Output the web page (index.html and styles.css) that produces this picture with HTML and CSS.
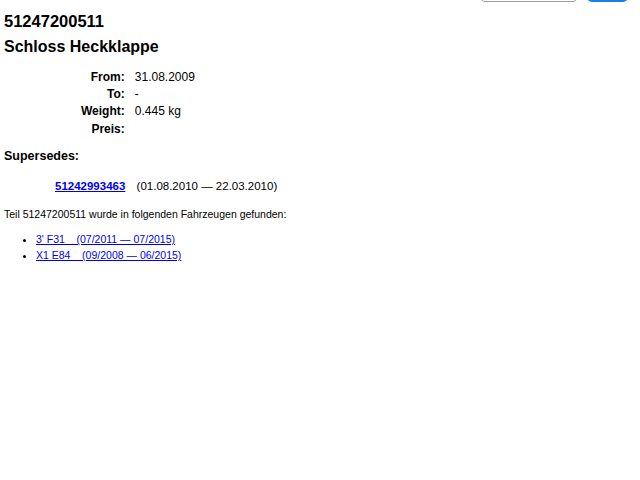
FILE: index.html
```html
<!DOCTYPE html>
<html lang="de">
<head>
    <meta charset="UTF-8">
    <meta name="viewport" content="width=device-width, initial-scale=1.0">
    <title>51247200511 Schloss Heckklappe</title>
    <link rel="stylesheet" href="styles.css">
</head>
<body>
    <header class="topbar">
        <form class="search">
            <input type="text" class="search-input">
            <button type="submit" class="search-button" aria-label="Suchen"></button>
        </form>
    </header>

    <main class="part">
        <h2 class="part-number">51247200511</h2>
        <h3 class="part-name">Schloss Heckklappe</h3>

        <table class="part-info">
            <tr><th>From:</th><td>31.08.2009</td></tr>
            <tr><th>To:</th><td>-</td></tr>
            <tr><th>Weight:</th><td>0.445 kg</td></tr>
            <tr><th>Preis:</th><td></td></tr>
        </table>

        <h4 class="supersedes-title">Supersedes:</h4>
        <div class="supersedes">
            <a href="#" class="supersedes-link">51242993463</a>
            <span class="supersedes-dates">(01.08.2010 — 22.03.2010)</span>
        </div>

        <p class="found-in">Teil 51247200511 wurde in folgenden Fahrzeugen gefunden:</p>
        <ul class="vehicles">
            <li><a href="#">3' F31&nbsp;&nbsp;&nbsp;&nbsp;(07/2011 — 07/2015)</a></li>
            <li><a href="#">X1 E84&nbsp;&nbsp;&nbsp;&nbsp;(09/2008 — 06/2015)</a></li>
        </ul>
    </main>
</body>
</html>
```

FILE: styles.css
```css
body {
    font-family: "Liberation Sans", Arial, sans-serif;
    background-color: #fff;
    color: #000;
    margin: 0;
    padding: 0 4px;
}

.topbar {
    margin-top: -26px;
    height: 28px;
    display: flex;
    justify-content: flex-end;
    padding-right: 8px;
}

.search {
    display: flex;
    gap: 9px;
    align-items: flex-end;
}

.search-input {
    width: 98px;
    height: 26px;
    box-sizing: border-box;
    border: 1px solid #a0a0a0;
    border-radius: 5px;
}

.search-button {
    width: 41px;
    height: 26px;
    border: none;
    border-radius: 5px;
    background-color: #1a7cf5;
}

.part-number {
    font-size: 16.5px;
    margin: 9px 0 0;
    line-height: 20px;
}

.part-name {
    font-size: 16px;
    margin: 6px 0 0;
    line-height: 20px;
}

.part-info {
    margin: 11px 0 0 77px;
    border-spacing: 0;
    font-size: 12px;
}

.part-info th {
    text-align: right;
    padding: 0 10px 0 0;
    height: 17.3px;
}

.part-info td {
    padding: 0;
}

.supersedes-title {
    font-size: 12.5px;
    margin: 12px 0 0;
}

.supersedes {
    margin: 17px 0 0 51px;
    font-size: 11.5px;
}

.supersedes-link {
    font-weight: bold;
    color: #0000ee;
    margin-right: 8px;
}

.found-in {
    font-size: 10.5px;
    margin: 16px 0 0;
}

.vehicles {
    font-size: 10.5px;
    margin: 11px 0 0;
    padding-left: 32px;
}

.vehicles li {
    line-height: 16px;
}

.vehicles a {
    color: #0000ee;
}
```
